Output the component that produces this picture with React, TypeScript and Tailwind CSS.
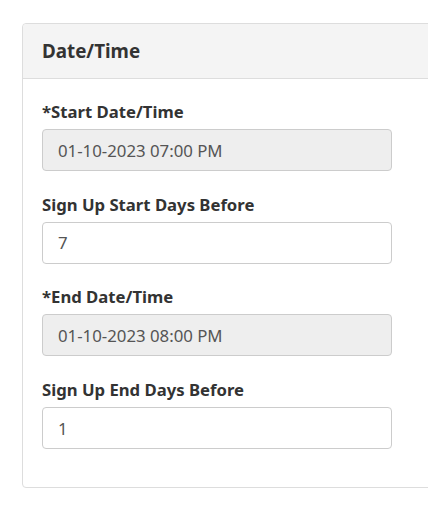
export default function App() {
  const fields = [
    { label: '*Start Date/Time', value: '01-10-2023 07:00 PM', disabled: true },
    { label: 'Sign Up Start Days Before', value: '7', disabled: false },
    { label: '*End Date/Time', value: '01-10-2023 08:00 PM', disabled: true },
    { label: 'Sign Up End Days Before', value: '1', disabled: false },
  ]

  return (
    <div className="w-[428px] h-[510px] overflow-hidden bg-white pt-[23px] pl-[22px] font-['Noto_Sans',sans-serif] text-[#333]">
      <div className="w-[440px] border border-[#ddd] rounded-[4px] bg-white">
        <div className="h-[55px] bg-[#f4f4f4] border-b border-[#ddd] rounded-t-[4px] px-[19px] flex items-center">
          <h3 className="text-[18.8px] font-bold">Date/Time</h3>
        </div>
        <div className="px-[19px] pt-[22px] pb-[15px]">
          {fields.map((f) => (
            <div key={f.label} className="mb-[22.7px]">
              <label className="block text-[16.7px] font-bold leading-[22px] mb-[6px]">{f.label}</label>
              <input
                readOnly
                disabled={f.disabled}
                value={f.value}
                className={
                  f.disabled
                    ? 'block w-[350px] h-[42px] px-[15px] text-[16.8px] text-[#555] bg-[#eee] border border-[#ccc] rounded-[4px] outline-none'
                    : 'block w-[350px] h-[42px] px-[15px] text-[16.8px] text-[#555] bg-white border border-[#ccc] rounded-[4px] outline-none'
                }
              />
            </div>
          ))}
        </div>
      </div>
    </div>
  )
}
